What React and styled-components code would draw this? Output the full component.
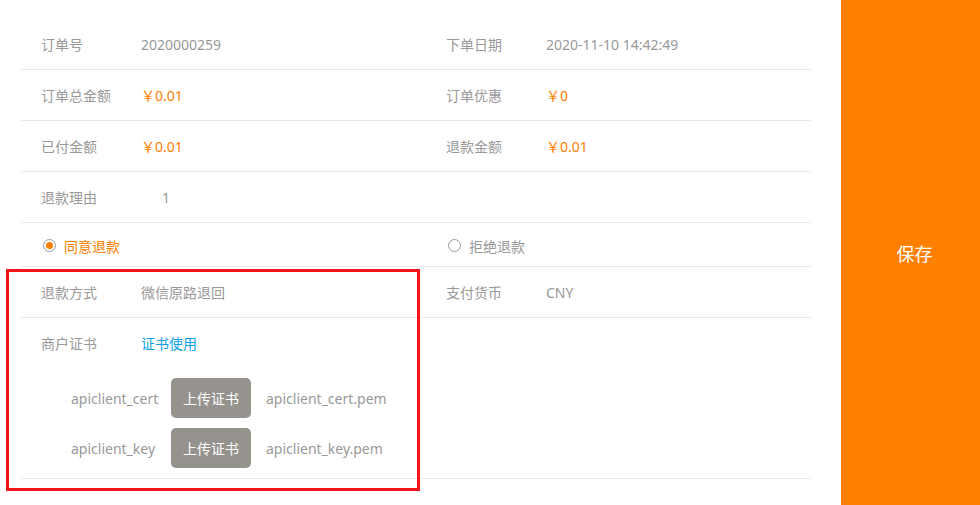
import React, { useState } from 'react'
import styled, { createGlobalStyle } from 'styled-components'

const GlobalStyle = createGlobalStyle`
	html, body {
		margin: 0;
		padding: 0;
		background: #fff;
	}
	body {
		font-family: 'Noto Sans', 'Noto Sans CJK SC', sans-serif;
		font-size: 14px;
		color: #999;
	}
`

const Page = styled.div`
	display: flex;
	width: 980px;
	height: 505px;
	overflow: hidden;
`

const Main = styled.div`
	position: relative;
	flex: 1;
	padding: 19px 30px 0 21px;
`

const Row = styled.div`
	display: grid;
	grid-template-columns: 405px 385px;
	height: ${({ h }) => h || 51}px;
	border-bottom: 1px solid #e8e8e8;
	align-items: center;
	padding-top: ${({ pt }) => pt || 0}px;
	box-sizing: border-box;
`

const Cell = styled.div`
	display: flex;
	align-items: center;
	padding-left: 20px;
`

const Label = styled.span`
	width: 100px;
	flex-shrink: 0;
	color: #999;
`

const Value = styled.span`
	color: ${({ color }) => color || '#999'};
	padding-left: ${({ indent }) => indent || 0}px;
`

const RadioLabel = styled.label`
	display: flex;
	align-items: center;
	gap: 8px;
	padding-left: 2px;
	cursor: pointer;
	color: ${({ checked }) => (checked ? '#ff8000' : '#999')};
`

const RadioDot = styled.span`
	width: 11px;
	height: 11px;
	border-radius: 50%;
	border: 1px solid #999;
	display: flex;
	align-items: center;
	justify-content: center;
	&::after {
		content: '';
		width: 7px;
		height: 7px;
		border-radius: 50%;
		background: ${({ checked }) => (checked ? '#ff8000' : 'transparent')};
	}
`

const CertBlock = styled.div`
	border-bottom: 1px solid #e8e8e8;
	padding-bottom: 10px;
`

const CertHead = styled.div`
	display: flex;
	align-items: center;
	height: 50px;
	padding-left: 20px;
	margin-bottom: 10px;
`

const CertLink = styled.a`
	color: #0ba0e6;
	text-decoration: none;
	cursor: pointer;
`

const CertList = styled.div`
	display: flex;
	flex-direction: column;
	gap: 10px;
	padding-left: 50px;
`

const CertRow = styled.div`
	display: flex;
	align-items: center;
	height: 40px;
`

const CertName = styled.span`
	width: 100px;
	color: #999;
`

const UploadBtn = styled.button`
	width: 80px;
	height: 40px;
	border: none;
	border-radius: 5px;
	background: #96938e;
	color: #fff;
	font-family: inherit;
	font-size: 14px;
	cursor: pointer;
	padding: 0;
`

const FileName = styled.span`
	margin-left: 15px;
	color: #999;
`

const Mark = styled.div`
	position: absolute;
	left: 6px;
	top: 269px;
	width: 414px;
	height: 222px;
	border: 3px solid #f5161b;
	box-sizing: border-box;
	pointer-events: none;
`

const Side = styled.button`
	width: 139px;
	height: 505px;
	border: none;
	background: #ff8000;
	color: #fff;
	font-family: inherit;
	font-size: 18px;
	padding: 0 0 0 8px;
	cursor: pointer;
`

const orange = '#ff8000'

const App = () => {
	const [agree, setAgree] = useState(true)

	return (
		<>
			<GlobalStyle />
			<Page>
				<Main>
					<Row>
						<Cell>
							<Label>订单号</Label>
							<Value>2020000259</Value>
						</Cell>
						<Cell>
							<Label>下单日期</Label>
							<Value>2020-11-10 14:42:49</Value>
						</Cell>
					</Row>
					<Row>
						<Cell>
							<Label>订单总金额</Label>
							<Value color={orange}>￥0.01</Value>
						</Cell>
						<Cell>
							<Label>订单优惠</Label>
							<Value color={orange}>￥0</Value>
						</Cell>
					</Row>
					<Row>
						<Cell>
							<Label>已付金额</Label>
							<Value color={orange}>￥0.01</Value>
						</Cell>
						<Cell>
							<Label>退款金额</Label>
							<Value color={orange}>￥0.01</Value>
						</Cell>
					</Row>
					<Row>
						<Cell>
							<Label>退款理由</Label>
							<Value indent={21}>1</Value>
						</Cell>
						<Cell />
					</Row>
					<Row h={44} pt={2}>
						<Cell>
							<RadioLabel checked={agree} onClick={() => setAgree(true)}>
								<RadioDot checked={agree} />
								同意退款
							</RadioLabel>
						</Cell>
						<Cell>
							<RadioLabel checked={!agree} onClick={() => setAgree(false)}>
								<RadioDot checked={!agree} />
								拒绝退款
							</RadioLabel>
						</Cell>
					</Row>
					<Row>
						<Cell>
							<Label>退款方式</Label>
							<Value>微信原路退回</Value>
						</Cell>
						<Cell>
							<Label>支付货币</Label>
							<Value>CNY</Value>
						</Cell>
					</Row>
					<CertBlock>
						<CertHead>
							<Label>商户证书</Label>
							<CertLink>证书使用</CertLink>
						</CertHead>
						<CertList>
							<CertRow>
								<CertName>apiclient_cert</CertName>
								<UploadBtn>上传证书</UploadBtn>
								<FileName>apiclient_cert.pem</FileName>
							</CertRow>
							<CertRow>
								<CertName>apiclient_key</CertName>
								<UploadBtn>上传证书</UploadBtn>
								<FileName>apiclient_key.pem</FileName>
							</CertRow>
						</CertList>
					</CertBlock>
					<Mark />
				</Main>
				<Side>保存</Side>
			</Page>
		</>
	)
}

export default App
